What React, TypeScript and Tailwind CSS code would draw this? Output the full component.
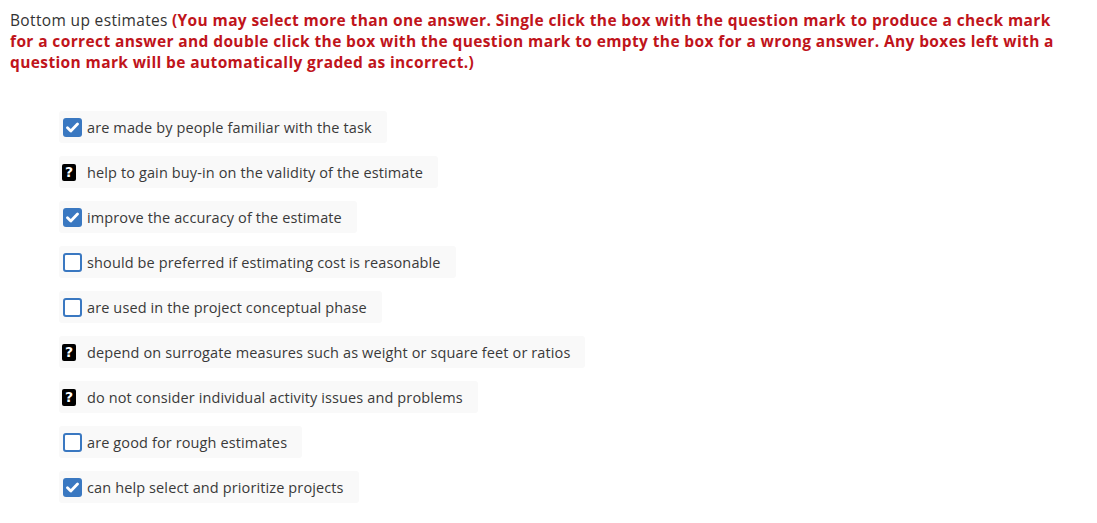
import React from 'react';

type Mark = 'check' | 'unknown' | 'empty';

const answers: Array<{ text: string; mark: Mark }> = [
  { text: 'are made by people familiar with the task', mark: 'check' },
  { text: 'help to gain buy-in on the validity of the estimate', mark: 'unknown' },
  { text: 'improve the accuracy of the estimate', mark: 'check' },
  { text: 'should be preferred if estimating cost is reasonable', mark: 'empty' },
  { text: 'are used in the project conceptual phase', mark: 'empty' },
  { text: 'depend on surrogate measures such as weight or square feet or ratios', mark: 'unknown' },
  { text: 'do not consider individual activity issues and problems', mark: 'unknown' },
  { text: 'are good for rough estimates', mark: 'empty' },
  { text: 'can help select and prioritize projects', mark: 'check' },
];

const MarkBox = ({ mark }: { mark: Mark }) => {
  if (mark === 'check') {
    return (
      <span className="flex h-[19px] w-[19px] items-center justify-center rounded-[3px] bg-[#3a78c1]">
        <svg width="13" height="11" viewBox="0 0 13 11">
          <path d="M1.5 5.8 L4.8 9 L11.5 2" fill="none" stroke="white" strokeWidth="2.8" strokeLinecap="round" strokeLinejoin="round" />
        </svg>
      </span>
    );
  }
  if (mark === 'unknown') {
    return (
      <span className="ml-[-1px] flex h-[17px] w-[14px] items-center justify-center rounded-[2px] bg-black font-['DejaVu_Sans',sans-serif] text-[14px] font-bold leading-none text-white">
        ?
      </span>
    );
  }
  return <span className="h-[19px] w-[19px] rounded-[3px] border-2 border-[#3a78c1] bg-white" />;
};

const App: React.FC = () => {
  return (
    <div className="min-h-[523px] bg-white px-[10px] pt-[10px] font-['Open_Sans',sans-serif] text-[15.5px] leading-[21px] text-[#333]">
      <p className="whitespace-nowrap">
        <span className="tracking-[0.35px]">Bottom up estimates</span>{' '}
        <span className="font-bold tracking-[0.38px] text-[#c0141b]">
          (You may select more than one answer. Single click the box with the question mark to produce a check mark
          <br />
          for a correct answer and double click the box with the question mark to empty the box for a wrong answer. Any
          boxes left with a
          <br />
          question mark will be automatically graded as incorrect.)
        </span>
      </p>

      <div className="mt-[38px] flex flex-col items-start gap-[13px] pl-[49px]">
        {answers.map((a, i) => (
          <div key={i} className="flex h-[32px] items-center rounded-[3px] bg-[#f9f9f9] pl-[4px] pr-[15px]">
            <span className="flex w-[24px] shrink-0 items-center">
              <MarkBox mark={a.mark} />
            </span>
            <span className="text-[14.5px] tracking-[0.12px] text-[#3a3a3a]">{a.text}</span>
          </div>
        ))}
      </div>
    </div>
  );
};

export default App;
